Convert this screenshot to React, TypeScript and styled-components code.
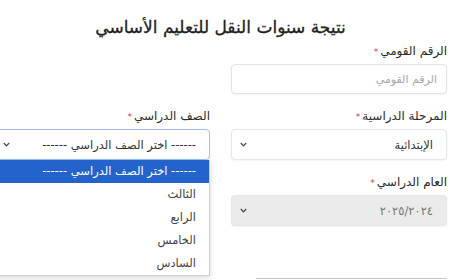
import React from "react";
import styled, { createGlobalStyle } from "styled-components";

const Global = createGlobalStyle`
  html, body {
    margin: 0;
    padding: 0;
    background: #fff;
    overflow: hidden;
  }
  body {
    width: 450px;
    height: 280px;
    font-family: "DejaVu Sans", "Noto Sans", sans-serif;
    color: #212529;
  }
`;

const Page = styled.div`
  direction: rtl;
  width: 453px;
  margin-left: -6px;
  padding-top: 12px;
`;

const Title = styled.h1`
  margin: 0;
  text-align: center;
  font-size: 17px;
  line-height: 30px;
  font-weight: 400;
  color: #222;
  -webkit-text-stroke: 0.3px #222;
`;

const Grid = styled.div`
  display: grid;
  grid-template-columns: 216px 216px;
  column-gap: 21px;
  row-gap: 13px;
`;

const Field = styled.div`
  display: flex;
  flex-direction: column;
  gap: 4px;
  position: relative;
`;

const Label = styled.label`
  display: block;
  height: 18px;
  font-size: 12px;
  line-height: 18px;
  color: #2b2b2b;
`;

const Star = styled.span`
  color: #d63a3a;
  font-size: 9px;
  line-height: 0;
  margin-right: 2px;
`;

const Input = styled.input`
  box-sizing: border-box;
  height: 30px;
  width: 100%;
  padding: 0 9px;
  border: 1px solid #e3e3e3;
  border-radius: 4px;
  box-shadow: 0 1px 2px rgba(0, 0, 0, 0.05);
  font: inherit;
  font-size: 11px;
  direction: rtl;
  outline: none;
  &::placeholder {
    color: #a8a8a8;
  }
`;

const SelectBox = styled.div<{ $focus?: boolean; $disabled?: boolean }>`
  box-sizing: border-box;
  height: 31px;
  display: flex;
  align-items: center;
  justify-content: space-between;
  padding: 0 13px 0 8px;
  border: 1px solid ${(p) => (p.$focus ? "#9cc3f0" : "#e6e6e6")};
  border-radius: 4px;
  background: ${(p) => (p.$disabled ? "#ebebeb" : "#fff")};
  box-shadow: 0 1px 2px rgba(0, 0, 0, 0.05);
  font-size: 11.5px;
  color: ${(p) => (p.$disabled ? "#777" : "#333")};
`;

const Chevron = () => (
  <svg width="7" height="5" viewBox="0 0 7 5">
    <path d="M0.8 1 L3.5 3.8 L6.2 1" fill="none" stroke="#444" strokeWidth="1.2" />
  </svg>
);

const Menu = styled.ul`
  position: absolute;
  top: 100%;
  left: 0;
  right: 0;
  margin: 0;
  padding: 0;
  list-style: none;
  background: #fff;
  border: 1px solid #d0d0d0;
  border-top: none;
  box-shadow: 0 2px 6px rgba(0, 0, 0, 0.15);
  z-index: 5;
`;

const Option = styled.li<{ $active?: boolean }>`
  height: 23px;
  line-height: 23px;
  padding: 0 13px;
  font-size: 11.5px;
  background: ${(p) => (p.$active ? "#2563cc" : "transparent")};
  color: ${(p) => (p.$active ? "#fff" : "#444")};
`;

const Footer = styled.div`
  display: flex;
  margin-top: 52px;
`;

const Rule = styled.div`
  width: 191px;
  border-top: 1px solid #c8c8c8;
`;

const grades = ["الثالث", "الرابع", "الخامس", "السادس"];

export default function App() {
  return (
    <>
      <Global />
      <Page>
        <Title>نتيجة سنوات النقل للتعليم الأساسي</Title>
        <Grid>
          <Field>
            <Label>
              الرقم القومي<Star>*</Star>
            </Label>
            <Input placeholder="الرقم القومي" />
          </Field>
          <div />
          <Field>
            <Label>
              المرحلة الدراسية<Star>*</Star>
            </Label>
            <SelectBox>
              <span>الإبتدائية</span>
              <Chevron />
            </SelectBox>
          </Field>
          <Field>
            <Label>
              الصف الدراسي<Star>*</Star>
            </Label>
            <SelectBox $focus>
              <span>------ اختر الصف الدراسي ------</span>
              <Chevron />
            </SelectBox>
            <Menu>
              <Option $active>------ اختر الصف الدراسي ------</Option>
              {grades.map((g) => (
                <Option key={g}>{g}</Option>
              ))}
            </Menu>
          </Field>
          <Field>
            <Label>
              العام الدراسي<Star>*</Star>
            </Label>
            <SelectBox $disabled>
              <span>٢٠٢٥/٢٠٢٤</span>
              <Chevron />
            </SelectBox>
          </Field>
        </Grid>
        <Footer>
          <Rule />
        </Footer>
      </Page>
    </>
  );
}
